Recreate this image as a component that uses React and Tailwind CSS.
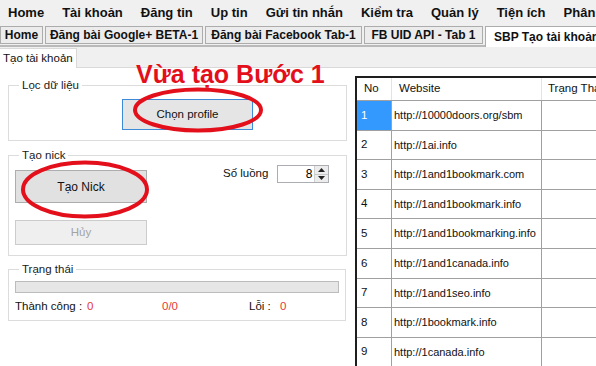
import React from "react";

const menuItems = ["Home", "Tài khoản", "Đăng tin", "Up tin", "Gửi tin nhắn", "Kiểm tra", "Quản lý", "Tiện ích", "Phân quyền"];

const tabs = [
  { label: "Home", w: "w-[43px]" },
  { label: "Đăng bài Google+ BETA-1", w: "w-[158px]" },
  { label: "Đăng bài Facebook Tab-1", w: "w-[157px]" },
  { label: "FB UID API - Tab 1", w: "w-[119px]" },
];

const sites = [
  "http://10000doors.org/sbm",
  "http://1ai.info",
  "http://1and1bookmark.com",
  "http://1and1bookmark.info",
  "http://1and1bookmarking.info",
  "http://1and1canada.info",
  "http://1and1seo.info",
  "http://1bookmark.info",
  "http://1canada.info",
];

function GroupBox({ title, className, children }) {
  return (
    <fieldset className={`mx-[8px] border border-[#dcdcdc] px-[6px] ${className}`}>
      <legend className="ml-[4px] px-[3px] h-[14px] leading-[14px] text-[11.5px] text-[#1a1a1a]">{title}</legend>
      {children}
    </fieldset>
  );
}

export default function App() {
  return (
    <div className="relative w-[596px] h-[366px] overflow-hidden bg-[#f0f0f0] font-['Liberation_Sans',Arial,sans-serif] text-[11px] text-black">
      {/* menu bar */}
      <div className="h-[25px] flex items-center gap-[18px] pl-[8px] whitespace-nowrap text-[13px] font-bold text-[#111]">
        {menuItems.map((m) => (
          <span key={m}>{m}</span>
        ))}
      </div>

      {/* top tabs */}
      <div className="h-[22px] flex items-end gap-[2px] border-b-2 border-[#b9b9b9] whitespace-nowrap text-[12px] font-bold">
        {tabs.map((t) => (
          <div
            key={t.label}
            className={`${t.w} h-[18px] mb-[1px] flex items-center justify-center border border-[#acacac] bg-[#ececec] text-[#111]`}
          >
            {t.label}
          </div>
        ))}
        <div className="flex-1 h-[21px] -mb-[2px] flex items-center pl-[8px] border-l border-t border-[#acacac] bg-white text-[#111] overflow-hidden">
          SBP Tạo tài khoản
        </div>
      </div>

      {/* inner tab strip */}
      <div className="h-[21px] flex items-end border-b border-[#d9d9d9]">
        <div className="w-[77px] h-[20px] -mb-[1px] flex items-center pl-[3px] bg-white border-r border-t border-[#d9d9d9] text-[11.5px] text-[#111]">
          Tạo tài khoản
        </div>
      </div>

      {/* content */}
      <div className="flex h-[298px] bg-white">
        <div className="w-[355px] shrink-0 pt-[10px]">
          <GroupBox title="Lọc dữ liệu" className="h-[63px]">
            <div className="pl-[107px] pt-[7px]">
              <button className="w-[131px] h-[31px] border border-[#3c8ad8] bg-[#e5e5e5] text-[11.5px] text-[#111]">
                Chọn profile
              </button>
            </div>
          </GroupBox>

          <GroupBox title="Tạo nick" className="h-[108px] mt-[7px]">
            <div className="flex items-start pt-[1px]">
              <div className="flex flex-col gap-[17px] pt-[7px]">
                <button className="w-[132px] h-[33px] border border-[#adadad] bg-[#e1e1e1] text-[12px] text-[#111]">
                  Tạo Nick
                </button>
                <button className="w-[132px] h-[25px] border border-[#cccccc] bg-[#efefef] text-[11.5px] text-[#a3a3a3]">
                  Hủy
                </button>
              </div>
              <div className="flex items-center ml-[76px] pt-[2px]">
                <span className="text-[11.5px] text-[#111] mr-[9px]">Số luồng</span>
                <div className="w-[52px] h-[18px] flex border border-[#abadb3] bg-white">
                  <span className="flex-1 text-right pr-[2px] leading-[16px] text-[12px]">8</span>
                  <div className="w-[14px] flex flex-col border-l border-[#d0d0d0]">
                    <div className="flex-1 flex items-center justify-center bg-[#ececec] border-b border-[#c8c8c8]">
                      <svg width="7" height="4" viewBox="0 0 7 4"><path d="M0 4 L3.5 0 L7 4 Z" fill="#222" /></svg>
                    </div>
                    <div className="flex-1 flex items-center justify-center bg-[#ececec]">
                      <svg width="7" height="4" viewBox="0 0 7 4"><path d="M0 0 L3.5 4 L7 0 Z" fill="#222" /></svg>
                    </div>
                  </div>
                </div>
              </div>
            </div>
          </GroupBox>

          <GroupBox title="Trạng thái" className="h-[59px] mt-[6px] w-[338px]">
            <div className="mt-[5px] h-[12px] border border-[#bcbcbc] bg-[#e6e6e6]" />
            <div className="flex items-center h-[20px] mt-[4px] text-[11.5px]">
              <span className="w-[72px] text-[#111]">Thành công :</span>
              <span className="w-[75px] text-[#e53935]">0</span>
              <span className="w-[87px] text-[#e53935]">0/0</span>
              <span className="w-[31px] text-[#111]">Lỗi :</span>
              <span className="text-[#e53935]">0</span>
            </div>
          </GroupBox>
        </div>

        {/* grid */}
        <div className="flex-1 min-w-0 mt-[8px] border-l-2 border-t-2 border-[#1e1e1e] bg-white text-[11.5px] text-[#111]">
          <div className="flex h-[23px] border-b border-[#a0a0a0]">
            <div className="w-[35px] shrink-0 flex items-center pl-[7px] border-r border-[#e3e3e3]">No</div>
            <div className="w-[150px] shrink-0 flex items-center pl-[7px] border-r border-[#e3e3e3]">Website</div>
            <div className="flex-1 min-w-0 flex items-center pl-[6px] whitespace-nowrap overflow-hidden">Trạng Thái</div>
          </div>
          {sites.map((s, i) => (
            <div key={s} className="flex h-[29.6px] border-b border-[#a0a0a0]">
              <div className={`w-[35px] shrink-0 flex items-center pl-[4px] border-r border-[#a0a0a0] ${i === 0 ? "bg-[#3399ff] text-white" : ""}`}>
                {i + 1}
              </div>
              <div className="w-[150px] shrink-0 flex items-center pl-[2px] border-r border-[#a0a0a0] whitespace-nowrap overflow-hidden text-[11px]">{s}</div>
              <div className="flex-1" />
            </div>
          ))}
        </div>
      </div>

      {/* annotation overlay */}
      <div className="absolute left-[136px] top-[60px] text-[25px] leading-[28px] font-bold text-[#e3101c] whitespace-nowrap">
        Vừa tạo Bước 1
      </div>
      <svg className="absolute inset-0 pointer-events-none" width="596" height="366">
        <ellipse cx="198" cy="110" rx="63" ry="20.5" fill="none" stroke="#e3101c" strokeWidth="4" />
        <ellipse cx="85" cy="189.5" rx="62" ry="27" fill="none" stroke="#e3101c" strokeWidth="4" />
      </svg>
    </div>
  );
}
